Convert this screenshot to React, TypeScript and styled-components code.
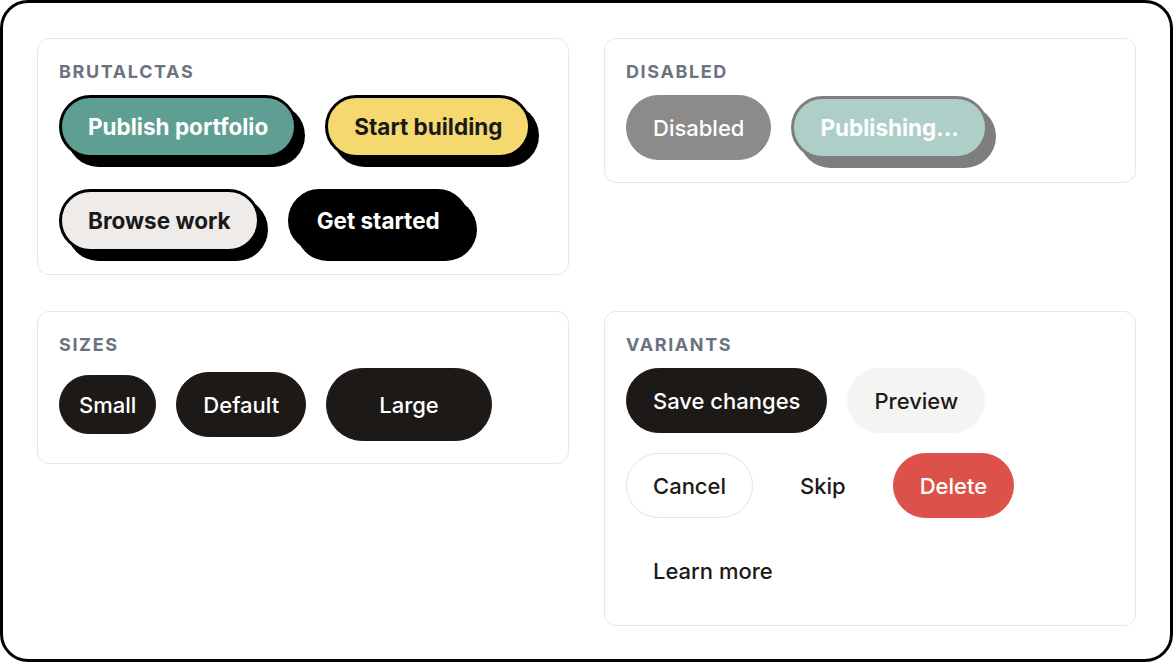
import React from "react";
import { createGlobalStyle, styled } from "styled-components";

const GlobalStyle = createGlobalStyle`
  * { box-sizing: border-box; }
  html, body { margin: 0; padding: 0; background: #fff; }
  body { font-family: Inter, "Liberation Sans", sans-serif; }
`;

type Size = "sm" | "default" | "lg";
type Variant = "primary" | "secondary" | "outline" | "ghost" | "destructive" | "link";

const SIZES: Record<Size, { h: number; px: number; fs: number }> = {
  sm: { h: 59, px: 19, fs: 22 },
  default: { h: 65, px: 26, fs: 22 },
  lg: { h: 73, px: 52, fs: 22 },
};

const VARIANTS: Record<Variant, { bg: string; fg: string; border: string }> = {
  primary: { bg: "#1c1917", fg: "#fff", border: "#1c1917" },
  secondary: { bg: "#f4f4f2", fg: "#1c1917", border: "#f4f4f2" },
  outline: { bg: "#fff", fg: "#1c1917", border: "#e4e4e2" },
  ghost: { bg: "transparent", fg: "#1c1917", border: "transparent" },
  destructive: { bg: "#dc524b", fg: "#fff", border: "#dc524b" },
  link: { bg: "transparent", fg: "#1c1917", border: "transparent" },
};

function BrutalCTAs() {
  return (
    <Card>
      <Label>BrutalCTAs</Label>
      <BrutalRow>
        <BrutalButton $bg="#5f9e93" $fg="#fff">Publish portfolio</BrutalButton>
        <BrutalButton $bg="#f5d96f" $fg="#1a1a1a">Start building</BrutalButton>
        <BrutalButton $bg="#efebe8" $fg="#1a1a1a">Browse work</BrutalButton>
        <BrutalButton $bg="#000" $fg="#fff">Get started</BrutalButton>
      </BrutalRow>
    </Card>
  );
}

function DisabledStates() {
  return (
    <Card>
      <Label>Disabled</Label>
      <Row>
        <Button $variant="primary" disabled>Disabled</Button>
        <BrutalButton $bg="#5f9e93" $fg="#fff" disabled>Publishing...</BrutalButton>
      </Row>
    </Card>
  );
}

function Sizes() {
  return (
    <Card>
      <Label>Sizes</Label>
      <Row>
        <Button $size="sm">Small</Button>
        <Button>Default</Button>
        <Button $size="lg">Large</Button>
      </Row>
    </Card>
  );
}

function Variants() {
  return (
    <Card>
      <Label>Variants</Label>
      <Row>
        <Button $variant="primary">Save changes</Button>
        <Button $variant="secondary">Preview</Button>
        <Button $variant="outline">Cancel</Button>
        <Button $variant="ghost">Skip</Button>
        <Button $variant="destructive">Delete</Button>
        <Button $variant="link">Learn more</Button>
      </Row>
    </Card>
  );
}

export default function App() {
  return (
    <>
      <GlobalStyle />
      <Frame>
        <Grid>
          <BrutalCTAs />
          <DisabledStates />
          <Sizes />
          <Variants />
        </Grid>
      </Frame>
    </>
  );
}

const Frame = styled.div`
  width: 1173px;
  height: 662px;
  border: 3px solid #000;
  border-radius: 28px;
  background: #fff;
  padding: 35px 33px 35px 34px;
  overflow: hidden;
`;

const Grid = styled.div`
  display: grid;
  grid-template-columns: 532px 532px;
  column-gap: 35px;
  row-gap: 36px;
  align-items: start;
`;

const Card = styled.section`
  border: 1px solid #e5e7eb;
  border-radius: 12px;
  padding: 22px 21px 22px;
  display: flex;
  flex-direction: column;
  gap: 12px;
`;

const Label = styled.h3`
  margin: 0;
  font-size: 18px;
  line-height: 22px;
  font-weight: 700;
  letter-spacing: 0.09em;
  text-transform: uppercase;
  color: #6b7280;
`;

const Row = styled.div`
  display: flex;
  flex-wrap: wrap;
  align-items: center;
  gap: 20px;
`;

const BrutalRow = styled.div`
  display: flex;
  flex-wrap: wrap;
  align-items: center;
  gap: 31px 28px;
`;

const BrutalButton = styled.button<{ $bg: string; $fg: string }>`
  height: 63px;
  padding: 0 26px;
  border: 3px solid #000;
  border-radius: 999px;
  background: ${(p) => p.$bg};
  color: ${(p) => p.$fg};
  box-shadow: 8px 9px 0 #000;
  font-family: Inter, "Liberation Sans", sans-serif;
  font-size: 22.5px;
  font-weight: 700;
  white-space: nowrap;
  cursor: pointer;

  &:disabled {
    opacity: 0.5;
    cursor: not-allowed;
  }
`;

const Button = styled.button<{ $size?: Size; $variant?: Variant }>`
  height: ${(p) => SIZES[p.$size ?? "default"].h}px;
  padding: 0 ${(p) => SIZES[p.$size ?? "default"].px}px;
  font-size: ${(p) => SIZES[p.$size ?? "default"].fs}px;
  background: ${(p) => VARIANTS[p.$variant ?? "primary"].bg};
  color: ${(p) => VARIANTS[p.$variant ?? "primary"].fg};
  border: 1.5px solid ${(p) => VARIANTS[p.$variant ?? "primary"].border};
  border-radius: 999px;
  font-family: Inter, "Liberation Sans", sans-serif;
  font-weight: 500;
  white-space: nowrap;
  cursor: pointer;

  &:disabled {
    opacity: 0.5;
    cursor: not-allowed;
  }
`;
